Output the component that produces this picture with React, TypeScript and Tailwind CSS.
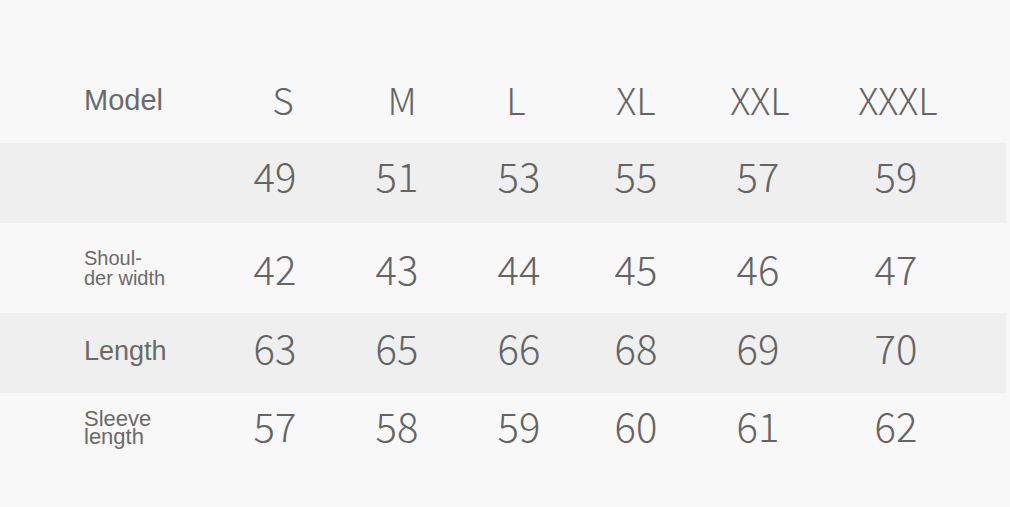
const sizes = ['S', 'M', 'L', 'XL', 'XXL', 'XXXL'];

// header letters sit a little off the number columns in the original
const headShift = ['pl-[16px]', 'pl-[10px]', 'pr-[6px]', '', 'pl-[4px]', 'pl-[4px]'];

const rows: { label: React.ReactNode; labelClass: string; values: number[]; striped: boolean; height: string; nudge: string }[] = [
    { label: '', labelClass: '', values: [49, 51, 53, 55, 57, 59], striped: true, height: 'h-[80px]', nudge: 'pb-[16px]' },
    {
        label: (<>Shoul-<br />der width</>),
        labelClass: 'text-[20px] leading-[20px]',
        values: [42, 43, 44, 45, 46, 47],
        striped: false,
        height: 'h-[90px]',
        nudge: 'pt-[0px]',
    },
    { label: 'Length', labelClass: 'text-[27px] leading-none pb-[4px]', values: [63, 65, 66, 68, 69, 70], striped: true, height: 'h-[80px]', nudge: 'pb-[12px]' },
    {
        label: (<>Sleeve<br />length</>),
        labelClass: 'text-[22px] leading-[18px] pb-[4px]',
        values: [57, 58, 59, 60, 61, 62],
        striped: false,
        height: 'h-[74px]',
        nudge: 'pb-[10px]',
    },
];

const grid = 'grid grid-cols-[214px_122px_122px_122px_112px_132px_144px] items-center pr-[4px]';
const numFont = "font-['Noto_Sans_CJK_SC','Noto_Sans',sans-serif] font-light text-[#646464]";
const labelFont = "font-['Liberation_Sans',Arial,sans-serif] text-[#6a6a6a]";

export default function App() {
    return (
        <div className="w-[1010px] h-[507px] bg-[#f8f8f8] pt-[60px] overflow-hidden">
            <div className={`${grid} h-[83px]`}>
                <div className={`${labelFont} pl-[84px] text-[29px] leading-none pb-[2px]`}>Model</div>
                {sizes.map((s, i) => (
                    <div key={s} className={`${numFont} ${headShift[i]} text-center text-[37px] leading-none pb-[4px]`}>
                        {s}
                    </div>
                ))}
            </div>
            {rows.map((row, r) => (
                <div
                    key={r}
                    className={`${grid} ${row.height} ${row.striped ? 'bg-[#efefef]' : ''} w-[1006px]`}
                >
                    <div className={`${labelFont} ${row.labelClass} pl-[84px]`}>{row.label}</div>
                    {row.values.map((v) => (
                        <div key={v} className={`${numFont} ${row.nudge} text-center text-[40px] leading-none`}>
                            {v}
                        </div>
                    ))}
                </div>
            ))}
        </div>
    );
}
